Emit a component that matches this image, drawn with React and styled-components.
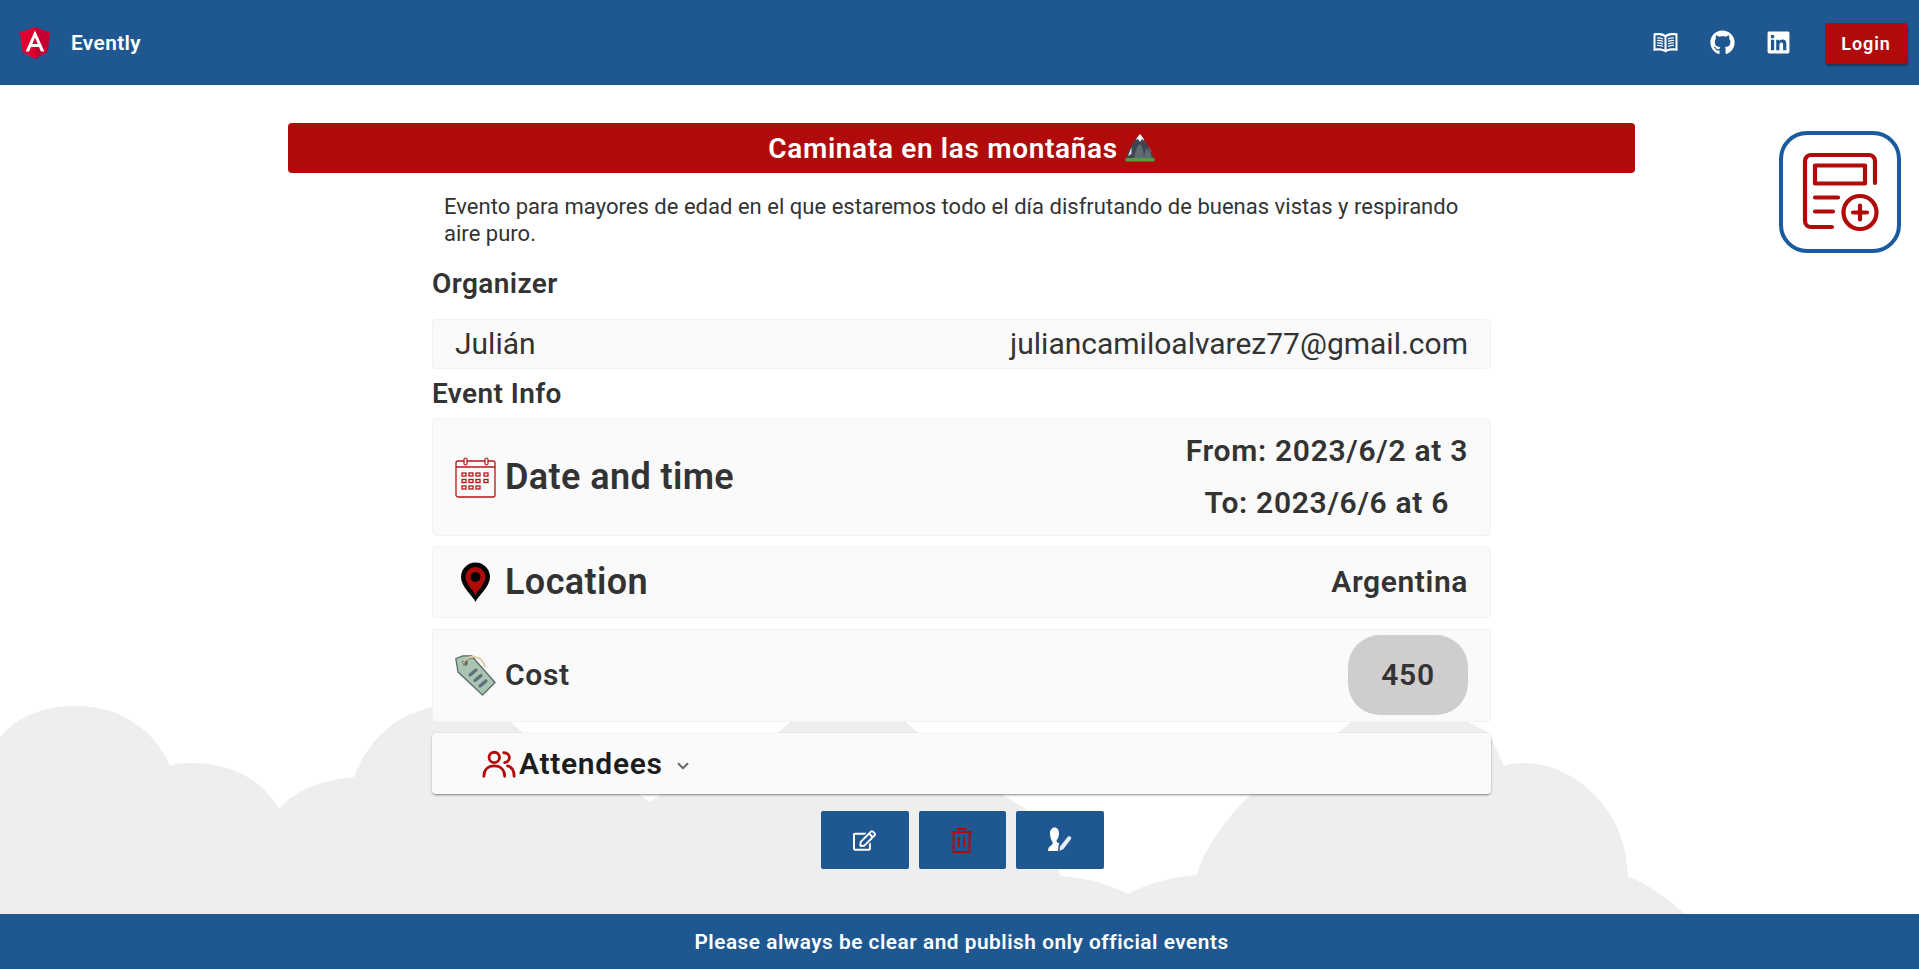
import React from "react";
import styled, { createGlobalStyle } from "styled-components";
import { FaGithub, FaLinkedin, FaRegEdit } from "react-icons/fa";
import { ChevronDown } from "lucide-react";

const Global = createGlobalStyle`
  * { box-sizing: border-box; }
  html, body { margin: 0; padding: 0; background: #fff; }
  body { font-family: Roboto, "Liberation Sans", sans-serif; color: #333; }
`;

const Page = styled.div`
  position: relative; height: 969px; display: flex; flex-direction: column; overflow: hidden; background: #fff;
`;
const Clouds = styled.svg`
  position: absolute; left: 0; top: 0; width: 1919px; height: 969px; z-index: 0;
`;
const Header = styled.header`
  position: relative; z-index: 1; height: 85px; flex: none; background: #1f5890;
  display: flex; align-items: center; padding: 0 12px 0 20px;
`;
const Brand = styled.div`display: flex; align-items: center; gap: 21px; color: #fff; font-size: 20.8px; font-weight: 600; letter-spacing: .4px;`;
const Logo = styled.svg`width: 30px; height: 32px; display: block;`;
const Spacer = styled.div`flex: 1;`;
const NavIcons = styled.nav`display: flex; align-items: center; gap: 31.5px; margin-right: 34px; color: #fff; font-size: 25px;`;
const NavSvg = styled.svg`width: 25px; height: 25px; display: block;`;
const LoginButton = styled.button`
  width: 82px; height: 41px; border: 0; border-radius: 2px; background: #b10a0a; color: #fff;
  font: 600 18px Roboto, sans-serif; letter-spacing: .9px; margin-top: 1px;
  box-shadow: 1px 2px 2px rgba(0,0,0,.35);
`;
const Main = styled.main`
  position: relative; z-index: 1; flex: 1; display: flex; flex-direction: column; align-items: center;
  padding: 38px 0 0 4px;
`;
const Title = styled.h1`
  width: 1347px; height: 50px; margin: 0; border-radius: 4px; background: #b10a0a; color: #fff;
  display: flex; align-items: center; justify-content: center; gap: 7px; font-size: 28px; font-weight: 600; letter-spacing: .66px;
`;
const Peak = styled.svg`width: 30px; height: 30px; display: block;`;
const Column = styled.section`width: 1059px; display: flex; flex-direction: column;`;
const Description = styled.p`
  margin: 20px 0 0; padding: 0 12px; font-size: 22px; letter-spacing: .02px; line-height: 27px; color: #333;
`;
const SectionLabel = styled.h2`margin: ${p => p.$top}px 0 ${p => p.$bottom}px; font-size: 28px; font-weight: 600; letter-spacing: .4px; line-height: 34px; color: #333;`;
const Card = styled.div`
  display: flex; align-items: center; justify-content: space-between; height: ${p => p.$h}px;
  margin-bottom: ${p => p.$gap}px; padding: 0 22px; background: #fafafa; border: 1px solid #f2f2f2; border-radius: 4px;
  font-size: 30px; font-weight: 400;
`;
const Plain = styled.span`margin-top: -2px;`;
const Head = styled.div`display: flex; align-items: center; gap: 9px;`;
const IconBox = styled.svg`width: 41px; height: 41px; display: block; flex: none;`;
const HeadText = styled.span`font-size: ${p => p.$size}px; font-weight: 600; letter-spacing: ${p => p.$track}px; color: #333; margin-top: ${p => p.$lift || 0}px;`;
const Dates = styled.div`display: flex; flex-direction: column; align-items: center; gap: 15px; font-size: 30px; font-weight: 600; letter-spacing: .7px; line-height: 37px; margin-top: -2px;`;
const Value = styled.span`font-size: 30px; font-weight: 600; letter-spacing: .6px; margin-top: -2px;`;
const Chip = styled.span`
  width: 120px; height: 80px; border-radius: 32px; background: #cfcdcd; display: flex; align-items: center; justify-content: center;
  font-size: 30px; font-weight: 600; letter-spacing: .7px; margin-top: -2px;
`;
const Panel = styled.div`
  display: flex; align-items: center; height: 61px; padding: 0 0 0 50px; background: #fafafa; border-radius: 4px;
  box-shadow: 0 2px 2px -1px rgba(0,0,0,.3), 0 1px 3px rgba(0,0,0,.2), 0 0 1px rgba(0,0,0,.1);
`;
const PanelTitle = styled.span`font-size: 30px; font-weight: 600; letter-spacing: .7px; color: #1d1d1d; margin-right: 11px; margin-top: -1px;`;
const PeopleIcon = styled.svg`width: 34px; height: 32px; display: block; flex: none; margin: 3px 3px 0 0;`;
const Chevron = styled(ChevronDown)`color: #666; margin-top: 5px;`;
const Actions = styled.div`display: flex; justify-content: center; gap: 10px; margin-top: 17px; padding-left: 1.5px;`;
const ActionButton = styled.button`
  width: 87.5px; height: 58px; padding: 0; border: 0; border-radius: 2px; background: #1f5890; display: flex; align-items: center; justify-content: center;
  color: #fff; font-size: 23px;
`;
const ActionSvg = styled.svg`width: 28px; height: 28px; display: block;`;
const Fab = styled.button`
  position: absolute; left: 1779px; top: 46px; width: 122px; height: 122px; padding: 0; background: #fff;
  border: 4.5px solid #1a5a9e; border-radius: 28px; display: flex; align-items: center; justify-content: center;
`;
const FabSvg = styled.svg`width: 80px; height: 80px; display: block;`;
const Footer = styled.footer`
  position: relative; z-index: 1; height: 55px; flex: none; background: #1f5890; color: #fff; display: flex; align-items: center; justify-content: center;
  padding-left: 4px; font-size: 20.8px; font-weight: 600; letter-spacing: .52px;
`;

const AngularLogo = () => (
  <Logo viewBox="0 0 30 32">
    <path d="M15 0 0 5.2l2.3 19.7L15 32z" fill="#dd0031" />
    <path d="M15 0l15 5.2-2.3 19.7L15 32z" fill="#c3002f" />
    <path d="M15 3.6 5.6 24.6h3.5l1.9-4.7h8l1.9 4.7h3.5L15 3.6zm2.7 13.4h-5.400L15 10.500z" fill="#fff" />
  </Logo>
);
const BookIcon = () => (
  <NavSvg viewBox="0 0 25 25">
    <path d="M.5 3.500C5 2.500 10 3 12.500 5 15 3 20 2.500 24.500 3.500V21C20 20 15 20.500 12.500 22.500 10 20.500 5 20 .5 21z" fill="#fff" />
    <path d="M2.500 5.500C6 5 9 5.500 11.500 7v12.500C9 18.500 6 18 2.500 18.500zM22.500 5.500C19 5 16 5.500 13.500 7v12.500c2.500-1 5.500-1.500 9-1z" fill="#1f5890" />
    <path d="M4 8c2.500-.2 4.500.2 6 1M4 10.500c2.500-.2 4.500.2 6 1M4 13c2.500-.2 4.500.2 6 1M4 15.500c2.500-.2 4.500.2 6 1M21 8c-2.500-.2-4.500.2-6 1M21 10.500c-2.500-.2-4.500.2-6 1M21 13c-2.500-.2-4.500.2-6 1M21 15.500c-2.500-.2-4.500.2-6 1" fill="none" stroke="#fff" strokeWidth="1.200" />
  </NavSvg>
);
const MountainIcon = () => (
  <Peak viewBox="0 0 30 30">
    <path d="M15 1C12 4 9 8 7 12 4 16 2 22 1 27h28c-1-5-3-10-6-14C20 9 18 4 15 1z" fill="#3d4650" />
    <path d="M15 1c-1.500 1.500-3 3.500-4.500 6l2.500-1 2 3 2-3 2.500 2C18.500 5 17 3 15 1z" fill="#f1f3f4" />
    <path d="M15 11c-3 1-5 8-6 15h10c0-6-1-12-4-15zM22 15c-2 3-3 7-3 11h8c-1-5-2-8-5-11z" fill="#5f6a73" />
    <path d="M6.500 14 3 23l3.500-2zM23 12l3.500 7-1-1z" fill="#d5dbdf" />
    <rect x="0.500" y="25" width="29" height="3.500" fill="#5b9a3c" />
  </Peak>
);
const CalendarIcon = () => (
  <IconBox viewBox="0 0 41 41" fill="none" stroke="#b81515">
    <rect x="1" y="4" width="39" height="36" rx="2" strokeWidth="1.300" />
    <path d="M1 10h39" strokeWidth="1.300" />
    <rect x="9" y="1" width="3" height="7" rx="1.500" fill="#fafafa" strokeWidth="1.200" />
    <rect x="30" y="1" width="3" height="7" rx="1.500" fill="#fafafa" strokeWidth="1.200" />
    {[[7,16],[14,16],[21,16],[29,16],[7,22.5],[14,22.5],[21,22.5],[29,22.5],[7,29],[14,29],[21,29]].map(([x,y]) => (
      <rect key={x + "-" + y} x={x} y={y} width="4" height="3" strokeWidth="1.300" />
    ))}
  </IconBox>
);
const PinIcon = () => (
  <IconBox viewBox="0 0 41 41">
    <path d="M20.500 40C18 34 6 25 6 15a14.500 14.500 0 0 1 29 0c0 10-12 19-14.500 25z" fill="#050505" />
    <path d="M20.500 33C18 28 10.500 21 10.500 15a10 10 0 0 1 20 0c0 6-7.500 13-10 18z" fill="#b10a0a" />
    <circle cx="20.500" cy="15" r="5" fill="#050505" />
  </IconBox>
);
const TagIcon = () => (
  <IconBox viewBox="0 0 41 41">
    <path d="M.8 3.500 8 .8h8.500L40 27.500 27.500 40 3 17z" fill="#a9c4b3" stroke="#5c6b66" strokeWidth="1.300" strokeLinejoin="round" />
    <circle cx="10" cy="8" r="2.800" fill="#5c6b66" />
    <path d="M8 11C9 4 15 1 20 2c6 1 9 5 10 10" fill="none" stroke="#d9cfa6" strokeWidth="2" />
    <path d="M8 11C9 5.500 15 2.500 20 3.500" fill="none" stroke="#6b6a58" strokeWidth=".8" />
    <path d="M15 20l6-5M20 25.500l6-5M25 31l6-5" stroke="#5d7079" strokeWidth="3.200" strokeLinecap="round" />
  </IconBox>
);
const PeopleGlyph = () => (
  <PeopleIcon viewBox="0 0 36 32" fill="none" stroke="#b10a0a" strokeWidth="3" strokeLinecap="round">
    <circle cx="13" cy="8" r="5.500" />
    <path d="M2 28c0-7 4.500-11 11-11s11 4 11 11M23 3c4 0 6 2.500 6 5s-2 5-5 5.500M27 17c4.500 1 7 5 7 11" />
  </PeopleIcon>
);
const TrashIcon = () => (
  <ActionSvg viewBox="0 0 28 28" fill="none" stroke="#b10a0a" strokeWidth="2">
    <path d="M3 6h21M10 6V3h7v3M5.500 6v20h16V6M11 11v10M16 11v10" />
  </ActionSvg>
);
const UserPenIcon = () => (
  <ActionSvg viewBox="0 0 28 28">
    <path fill="#fff" d="M8.500 1.500c3 0 4.500 2.500 4.500 5.500 0 3-1 6-2.500 7.500 0 1.500 1 2.500 3 3l-1 2-.5 5.500H2c0-2.500 1-4.500 3-5.500 1.500-.8 2-2 1.500-3.500C4.500 13 4 10 4 7c0-3 2-5.500 4.500-5.500z" />
    <path fill="#e4edf5" d="M22 10.500c1.500-1.200 4.200.8 3 2.500L17.500 23l-4 2 .5-4.500z" />
  </ActionSvg>
);
const FabIcon = () => (
  <FabSvg viewBox="0 0 80 80" fill="none" stroke="#b10a0a" strokeWidth="4.200" strokeLinecap="round" strokeLinejoin="round">
    <path d="M75 31V9a6 6 0 0 0-6-6H11a6 6 0 0 0-6 6v60a6 6 0 0 0 6 6h21" />
    <rect x="15" y="13.500" width="50" height="18" strokeLinecap="butt" />
    <path d="M15 45.500h23M15 59.500h18" />
    <circle cx="60" cy="60.500" r="16.500" />
    <path d="M60 53.500v14M53 60.500h14" />
  </FabSvg>
);

export default function App() {
  return (
    <Page>
      <Global />
      <Clouds viewBox="0 0 1919 969">
        <path fill="#eeeeee" d="M0 738C16 716 44 706 77 706 120 706 155 730 170 766 178 763 185 763 193 763 232 763 262 780 279 809 295 790 322 780 354 777 368 740 395 716 429 708 450 700 480 702 511 722L523 733 640 795 650 802 660 795 778 733 790 722C815 708 875 708 906 722L918 733 1003 795 1024 808C1042 828 1055 850 1058 870L1061 876C1090 878 1110 885 1128 894 1148 883 1172 877 1197 875 1203 850 1225 820 1250 795L1339 732 1351 722C1385 693 1435 695 1468 722L1489 733 1504 766C1510 763 1518 763 1526 763 1580 765 1625 815 1627 867L1628 876C1655 888 1675 905 1685 914L1685 969 0 969Z" />
      </Clouds>
      <Header>
        <Brand><AngularLogo /><span>Evently</span></Brand>
        <Spacer />
        <NavIcons>
          <BookIcon />
          <FaGithub />
          <FaLinkedin />
        </NavIcons>
        <LoginButton>Login</LoginButton>
      </Header>
      <Main>
        <Title>Caminata en las montañas <MountainIcon /></Title>
        <Column>
          <Description>Evento para mayores de edad en el que estaremos todo el día disfrutando de buenas vistas y respirando aire puro.</Description>
          <SectionLabel $top={20} $bottom={18}>Organizer</SectionLabel>
          <Card $h={50} $gap={3}><Plain>Julián</Plain><Plain>juliancamiloalvarez77@gmail.com</Plain></Card>
          <SectionLabel $top={5} $bottom={7}>Event Info</SectionLabel>
          <Card $h={118} $gap={10}>
            <Head><CalendarIcon /><HeadText $size={36} $track={.4}>Date and time</HeadText></Head>
            <Dates><span>From: 2023/6/2 at 3</span><span>To: 2023/6/6 at 6</span></Dates>
          </Card>
          <Card $h={72} $gap={11}>
            <Head><PinIcon /><HeadText $size={36} $track={.4}>Location</HeadText></Head>
            <Value>Argentina</Value>
          </Card>
          <Card $h={93} $gap={11}>
            <Head><TagIcon /><HeadText $size={30} $track={.7} $lift={-2}>Cost</HeadText></Head>
            <Chip>450</Chip>
          </Card>
          <Panel>
            <PeopleGlyph /><PanelTitle>Attendees</PanelTitle><Chevron size={18} strokeWidth={2.5} />
          </Panel>
          <Actions>
            <ActionButton aria-label="Edit"><FaRegEdit /></ActionButton>
            <ActionButton aria-label="Delete"><TrashIcon /></ActionButton>
            <ActionButton aria-label="Sign up"><UserPenIcon /></ActionButton>
          </Actions>
        </Column>
        <Fab aria-label="New event"><FabIcon /></Fab>
      </Main>
      <Footer>Please always be clear and publish only official events</Footer>
    </Page>
  );
}
